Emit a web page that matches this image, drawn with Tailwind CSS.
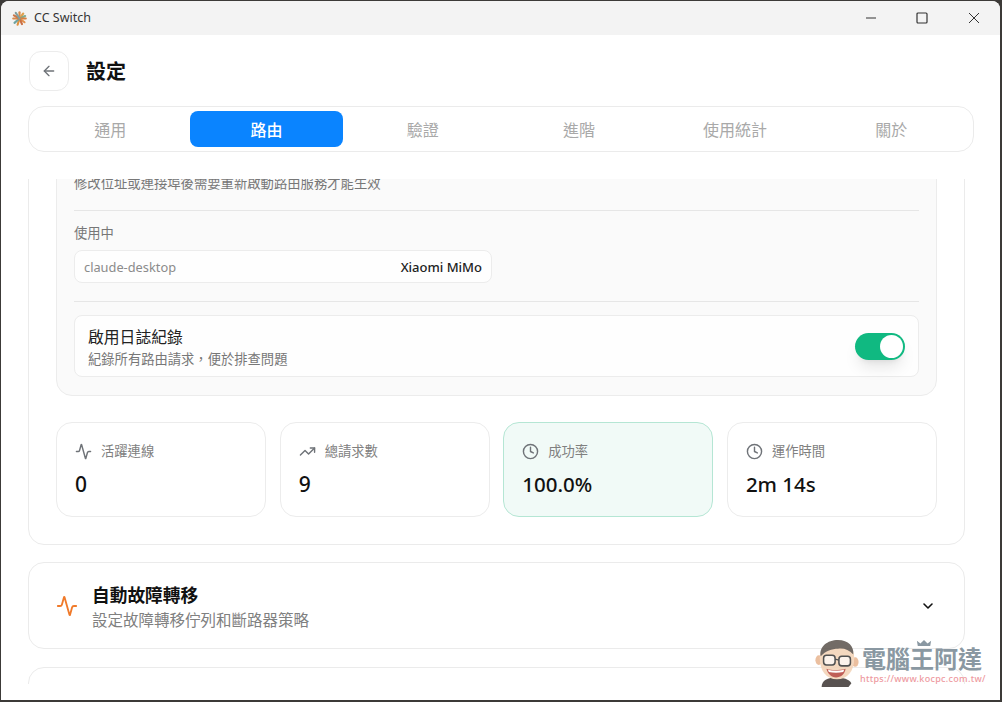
<!DOCTYPE html>
<html lang="zh-Hant">
<head>
    <meta charset="UTF-8">
    <title>CC Switch</title>
    <script src="https://cdn.jsdelivr.net/npm/@tailwindcss/browser@4"></script>
</head>
<body class="bg-[#3c3a38] w-[1002px] h-[702px] overflow-hidden font-['Noto_Sans','Noto_Sans_CJK_TC',sans-serif]">
    <div class="relative ml-[1px] mt-[1px] w-[999px] h-[699px] bg-white rounded-t-lg overflow-hidden flex flex-col">
        <!-- Title bar -->
        <div class="h-[34px] shrink-0 bg-[#f3f3f3] flex items-center">
            <svg class="ml-[11px] w-[15px] h-[15px]" viewBox="0 0 24 24" fill="none" stroke-width="3.4" stroke-linecap="round">
                <path d="M12 12V2" stroke="#d98a4a"/>
                <path d="M12 12l6-8" stroke="#e0a14f"/>
                <path d="M12 12l9-4" stroke="#7fa98f"/>
                <path d="M12 12h10" stroke="#d9803f"/>
                <path d="M12 12l8 6" stroke="#e2904a"/>
                <path d="M12 12l4 9" stroke="#c96f45"/>
                <path d="M12 12l-3 10" stroke="#e0913f"/>
                <path d="M12 12l-8 7" stroke="#6fa3a0"/>
                <path d="M12 12H2" stroke="#d98a4a"/>
                <path d="M12 12L3 7" stroke="#c9774a"/>
                <path d="M12 12L6 3" stroke="#7f9f9f"/>
            </svg>
            <span class="ml-[7px] text-[12.5px] text-[#333]">CC Switch</span>
            <div class="ml-auto flex items-center">
                <svg class="w-[12px] h-[12px] mr-[39px]" viewBox="0 0 12 12" fill="none" stroke="#333" stroke-width="1"><path d="M1 6h10"/></svg>
                <svg class="w-[12px] h-[12px] mr-[40px]" viewBox="0 0 12 12" fill="none" stroke="#333" stroke-width="1.2"><rect x="1" y="1" width="10" height="10" rx="1"/></svg>
                <svg class="w-[12px] h-[12px] mr-[20px]" viewBox="0 0 12 12" fill="none" stroke="#333" stroke-width="1"><path d="M1 1l10 10M11 1L1 11"/></svg>
            </div>
        </div>

        <!-- Header -->
        <div class="h-[144px] shrink-0 pl-[27px] pt-[16px]">
            <div class="flex items-center pl-[1px]">
                <button class="w-[40px] h-[40px] rounded-xl border border-[#ececec] bg-white flex items-center justify-center">
                    <svg class="w-[16px] h-[16px] -mt-[1px]" viewBox="0 0 24 24" fill="none" stroke="#6f7378" stroke-width="2" stroke-linecap="round" stroke-linejoin="round"><path d="m12 19-7-7 7-7"/><path d="M19 12H5"/></svg>
                </button>
                <h1 class="ml-[17px] pt-[2px] text-[20px] font-bold text-[#111] leading-none">設定</h1>
            </div>
            <!-- Tabs -->
            <div class="mt-[15px] w-[945.6px] h-[46px] rounded-2xl border border-[#ebebeb] bg-white grid grid-cols-6 gap-[3.5px] px-[5px] py-[4px] text-[16px] text-[#a9a9a9]">
                <div class="flex items-center justify-center rounded-lg pt-[2px]">通用</div>
                <div class="flex items-center justify-center rounded-lg pt-[2px] bg-[#0a84ff] text-white font-medium">路由</div>
                <div class="flex items-center justify-center rounded-lg pt-[2px]">驗證</div>
                <div class="flex items-center justify-center rounded-lg pt-[2px]">進階</div>
                <div class="flex items-center justify-center rounded-lg pt-[2px]">使用統計</div>
                <div class="flex items-center justify-center rounded-lg pt-[2px]">關於</div>
            </div>
        </div>

        <!-- Scrolling content, clipped top and bottom -->
        <div class="h-[505px] shrink-0 overflow-hidden px-[27px]">
            <div class="-mt-[40px] w-[937px] h-[406px] rounded-2xl border border-[#ebebeb] bg-white px-[27px] pt-0">
                <div class="w-[881px] h-[256px] rounded-2xl border border-[#ececec] bg-[#fafafa] px-[17px] pt-[32px]">
                    <p class="text-[13.33px] leading-[20px] text-[#777]">修改位址或連接埠後需要重新啟動路由服務才能生效</p>
                    <div class="mt-[17px] border-t border-[#e6e6e6]"></div>
                    <p class="mt-[12px] text-[13.3px] leading-[20px] text-[#777]">使用中</p>
                    <div class="mt-[7px] w-[418px] h-[33px] rounded-lg border border-[#ececec] bg-white/70 flex items-center justify-between px-[9px] pt-[2px]">
                        <span class="text-[12.8px] text-[#8b8b8b]">claude-desktop</span>
                        <span class="text-[13px] font-medium text-[#222]">Xiaomi MiMo</span>
                    </div>
                    <div class="mt-[18px] border-t border-[#e6e6e6]"></div>
                    <div class="mt-[13px] h-[62px] rounded-lg border border-[#ececec] bg-white/70 flex items-center justify-between pl-[13px] pr-[13px]">
                        <div class="pt-[2px]">
                            <p class="text-[15.8px] leading-[22px] text-[#222]">啟用日誌紀錄</p>
                            <p class="mt-[2px] text-[13.3px] leading-[18px] text-[#777]">紀錄所有路由請求&#65292;便於排查問題</p>
                        </div>
                        <div class="w-[50px] h-[27px] rounded-full bg-[#10b981] shadow-lg shadow-black/10 flex items-center justify-end pr-[2px]">
                            <div class="w-[23px] h-[23px] rounded-full bg-white"></div>
                        </div>
                    </div>
                </div>

                <!-- Stats -->
                <div class="mt-[26px] w-[881px] grid grid-cols-4 gap-[13.5px]">
                    <div class="h-[95px] rounded-2xl border border-[#ececec] bg-white px-[18px] pt-[18px]">
                        <div class="flex items-center gap-[9px] text-[13.3px] text-[#808080] leading-[20px]">
                            <svg class="w-[17px] h-[17px]" viewBox="0 0 24 24" fill="none" stroke="#6f7378" stroke-width="2" stroke-linecap="round" stroke-linejoin="round"><path d="M22 12h-2.48a2 2 0 0 0-1.93 1.46l-2.35 8.36a.25.25 0 0 1-.48 0L9.24 2.18a.25.25 0 0 0-.48 0l-2.35 8.36A2 2 0 0 1 4.49 12H2"/></svg>
                            活躍連線
                        </div>
                        <p class="mt-[8px] text-[21px] leading-[30px] font-medium text-[#111]">0</p>
                    </div>
                    <div class="h-[95px] rounded-2xl border border-[#ececec] bg-white px-[18px] pt-[18px]">
                        <div class="flex items-center gap-[9px] text-[13.3px] text-[#808080] leading-[20px]">
                            <svg class="w-[17px] h-[17px]" viewBox="0 0 24 24" fill="none" stroke="#6f7378" stroke-width="2" stroke-linecap="round" stroke-linejoin="round"><path d="M22 7l-8.500 8.500-5-5L2 17"/><path d="M16 7h6v6"/></svg>
                            總請求數
                        </div>
                        <p class="mt-[8px] text-[21px] leading-[30px] font-medium text-[#111]">9</p>
                    </div>
                    <div class="h-[95px] rounded-2xl border border-[#b5e6d4] bg-[#f1faf7] px-[18px] pt-[18px]">
                        <div class="flex items-center gap-[9px] text-[13.3px] text-[#808080] leading-[20px]">
                            <svg class="w-[17px] h-[17px]" viewBox="0 0 24 24" fill="none" stroke="#6f7378" stroke-width="2" stroke-linecap="round" stroke-linejoin="round"><circle cx="12" cy="12" r="10"/><path d="M12 6v6l4 2"/></svg>
                            成功率
                        </div>
                        <p class="mt-[8px] text-[20.5px] leading-[30px] font-medium text-[#111]">100.0%</p>
                    </div>
                    <div class="h-[95px] rounded-2xl border border-[#ececec] bg-white px-[18px] pt-[18px]">
                        <div class="flex items-center gap-[9px] text-[13.3px] text-[#808080] leading-[20px]">
                            <svg class="w-[17px] h-[17px]" viewBox="0 0 24 24" fill="none" stroke="#6f7378" stroke-width="2" stroke-linecap="round" stroke-linejoin="round"><circle cx="12" cy="12" r="10"/><path d="M12 6v6l4 2"/></svg>
                            運作時間
                        </div>
                        <p class="mt-[8px] text-[20.5px] leading-[30px] font-medium text-[#111]">2m 14s</p>
                    </div>
                </div>
            </div>

            <!-- Failover section -->
            <div class="mt-[17px] w-[937px] h-[87px] rounded-2xl border border-[#ebebeb] bg-white flex items-center pl-[27px] pr-[28px]">
                <svg class="w-[22px] h-[22px]" viewBox="0 0 24 24" fill="none" stroke="#f07a2a" stroke-width="2" stroke-linecap="round" stroke-linejoin="round"><path d="M22 12h-2.48a2 2 0 0 0-1.93 1.46l-2.35 8.36a.25.25 0 0 1-.48 0L9.24 2.18a.25.25 0 0 0-.48 0l-2.35 8.36A2 2 0 0 1 4.49 12H2"/></svg>
                <div class="ml-[14px] pt-[4px]">
                    <p class="text-[17.7px] leading-[23px] font-bold text-[#111]">自動故障轉移</p>
                    <p class="mt-[2px] text-[15.5px] leading-[22px] text-[#808080]">設定故障轉移佇列和斷路器策略</p>
                </div>
                <svg class="ml-auto w-[16px] h-[16px]" viewBox="0 0 24 24" fill="none" stroke="#111" stroke-width="2.4" stroke-linecap="round" stroke-linejoin="round"><path d="m6 9 6 6 6-6"/></svg>
            </div>

            <!-- Next section, mostly cut off -->
            <div class="mt-[18px] w-[937px] h-[87px] rounded-2xl border border-[#ebebeb] bg-white"></div>
        </div>

        <!-- Watermark -->
        <div class="absolute left-[812px] top-[636px] w-[175px] h-[52px]">
            <svg class="absolute left-[1px] top-[2px] w-[46px] h-[48px] opacity-85" viewBox="0 0 48 50">
                <path d="M8 50c0-7 6-10 16-10s14 4 15 6l-3 4z" fill="#3b3532"/>
                <ellipse cx="5" cy="22" rx="3.500" ry="5" fill="#e8b48f"/>
                <ellipse cx="43" cy="24" rx="3.500" ry="5" fill="#e8b48f"/>
                <path d="M6 20c0-11 8-17 19-17s17 7 17 17c0 13-7 22-18 22S6 33 6 20z" fill="#f3d2b5"/>
                <path d="M7 18C5 8 14 1 25 1s17 7 16 15c-5-5-10-7-16-6-6 0-13 2-18 8z" fill="#5a524c"/>
                <rect x="10" y="17" width="12" height="10" rx="3" fill="#fff" fill-opacity=".7" stroke="#333" stroke-width="1.600"/>
                <rect x="26" y="18" width="12" height="10" rx="3" fill="#fff" fill-opacity=".7" stroke="#333" stroke-width="1.600"/>
                <path d="M22 21l4 1" stroke="#333" stroke-width="1.400"/>
                <path d="M13 31c5 2 13 2 20 0-1 6-5 9-10 9s-9-4-10-9z" fill="#b5423a"/>
                <path d="M14.500 32c5 1.500 11 1.500 17 0l-1 2.500c-5 1-10 1-15 0z" fill="#fff"/>
            </svg>
            <div class="absolute left-[49px] top-[10px] text-[24px] leading-[24px] font-bold text-[#8a98a2] whitespace-nowrap">電腦王阿達</div>
            <svg class="absolute left-[103px] top-[2px] w-[16px] h-[8px]" viewBox="0 0 18 9"><path d="M2 8L1 2l4 3 4-4 4 4 4-3-1 6z" fill="#8a98a2"/></svg>
            <div class="absolute left-[47px] top-[37px] text-[9px] leading-[10px] font-medium text-[#ee9aa0] whitespace-nowrap tracking-[0.3px]">https://www.kocpc.com.tw/</div>
        </div>
    </div>
</body>
</html>
